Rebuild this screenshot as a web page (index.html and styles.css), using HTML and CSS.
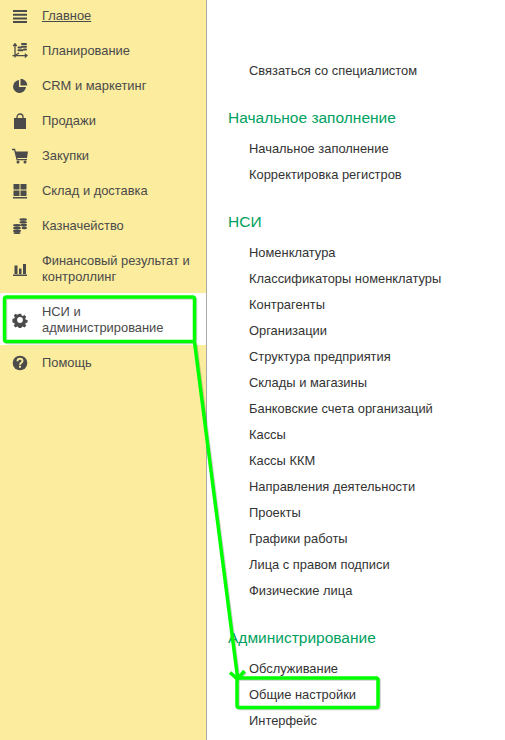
FILE: index.html
```html
<!DOCTYPE html>
<html lang="ru">
<head>
<meta charset="utf-8">
<title>НСИ и администрирование</title>
<link rel="stylesheet" href="styles.css">
</head>
<body>
<div class="page">
  <nav class="sidebar">
    <ul class="nav">
      <li class="nav-item">
        <svg class="icon" viewBox="0 0 16 16"><path d="M1 2h14v2H1zM1 5.700h14v2H1zM1 9.400h14v2H1zM1 13h14v2H1z"/></svg>
        <span class="nav-label current">Главное</span>
      </li>
      <li class="nav-item">
        <svg class="icon" viewBox="0 0 16 16"><path class="line" d="M3 1v13.500M.5 12.600h14.500M1.300 3L3 .8 4.700 3M12.800 10.800l2.200 1.800-2.200 1.800M3 12.500l4-2.500"/><rect x="9" y="0" width="6" height="2" rx="1"/><rect x="9" y="2.700" width="6" height="2" rx="1"/><rect x="5.500" y="3.500" width="4.500" height="2" rx="1"/><rect x="5.500" y="6.200" width="6" height="2" rx="1"/><rect x="11" y="5.400" width="4" height="2" rx="1"/></svg>
        <span class="nav-label">Планирование</span>
      </li>
      <li class="nav-item">
        <svg class="icon" viewBox="0 0 16 16"><path d="M7 2a6.500 6.500 0 1 0 7 7H7z"/><path d="M8.500 .7a7 7 0 0 1 6.800 6.800H8.500z"/></svg>
        <span class="nav-label">CRM и маркетинг</span>
      </li>
      <li class="nav-item">
        <svg class="icon" viewBox="0 0 16 16"><path d="M2 5h12v11H2z"/><path class="line" d="M5 8V4a3 3 0 0 1 6 0v4"/></svg>
        <span class="nav-label">Продажи</span>
      </li>
      <li class="nav-item">
        <svg class="icon" viewBox="0 0 16 16"><path d="M3.500 3.500H16l-1 6.500H4.500z"/><path d="M4.500 11h10.500v1.300H4.500z"/><circle cx="6" cy="14" r="1.500"/><circle cx="13" cy="14" r="1.500"/><path class="line" d="M0 1.500h2.600L5 11"/></svg>
        <span class="nav-label">Закупки</span>
      </li>
      <li class="nav-item">
        <svg class="icon" viewBox="0 0 16 16"><path d="M1.500 1h6v5.500h-6zM8.500 1h6v5.500h-6zM1.500 7.500h6V13h-6zM8.500 7.500h6V13h-6zM1 14h14v1.500H1z"/></svg>
        <span class="nav-label">Склад и доставка</span>
      </li>
      <li class="nav-item">
        <svg class="icon" viewBox="0 0 16 16"><ellipse cx="11.200" cy="1.500" rx="3.800" ry="1.300"/><ellipse cx="11.200" cy="4.300" rx="3.800" ry="1.300"/><ellipse cx="11.800" cy="7.100" rx="3.200" ry="1.300"/><ellipse cx="12.300" cy="9.900" rx="2.700" ry="1.300"/><ellipse cx="5" cy="7.300" rx="4" ry="1.400"/><ellipse cx="5" cy="10.100" rx="4" ry="1.400"/><ellipse cx="5" cy="12.900" rx="4" ry="1.400"/><ellipse cx="5" cy="14.900" rx="3.600" ry="1"/></svg>
        <span class="nav-label">Казначейство</span>
      </li>
      <li class="nav-item">
        <svg class="icon" viewBox="0 0 16 16"><path d="M2.500 4.500h3V13h-3zM7 7.500h2.500V13H7zM11 3h3v10h-3zM1 13.500h14V15H1z"/></svg>
        <span class="nav-label">Финансовый результат и контроллинг</span>
      </li>
      <li class="nav-item active">
        <svg class="icon" viewBox="0 0 16 16"><path fill-rule="evenodd" d="M6.600 1h2.800l.4 2 1.300.6 1.800-1.100 2 2-1.100 1.800.6 1.300 2 .4v2.800l-2 .4-.6 1.300 1.100 1.800-2 2-1.800-1.100-1.300.6-.4 2H6.600l-.4-2-1.300-.6-1.800 1.100-2-2 1.100-1.800-.6-1.300-2-.4V6.600l2-.4.6-1.300-1.100-1.800 2-2 1.800 1.100 1.300-.6zM8 4.800a3.200 3.200 0 1 0 0 6.400 3.200 3.200 0 0 0 0-6.400z" transform="translate(.8 .8) scale(.9)"/></svg>
        <span class="nav-label">НСИ и администрирование</span>
      </li>
      <li class="nav-item">
        <svg class="icon" viewBox="0 0 16 16"><circle cx="8" cy="8" r="7.300"/><path class="hole" d="M5.500 6.200c0-1.500 1.100-2.400 2.500-2.400s2.500.9 2.500 2.200c0 1.800-2.500 1.800-2.500 3.700"/><rect class="dot" x="7" y="10.700" width="2" height="2"/></svg>
        <span class="nav-label">Помощь</span>
      </li>
    </ul>
  </nav>
  <main class="content">
    <ul class="links">
      <li>Связаться со специалистом</li>
    </ul>
    <section class="group">
      <h2 class="group-title">Начальное заполнение</h2>
      <ul class="links">
        <li>Начальное заполнение</li>
        <li>Корректировка регистров</li>
      </ul>
    </section>
    <section class="group">
      <h2 class="group-title">НСИ</h2>
      <ul class="links">
        <li>Номенклатура</li>
        <li>Классификаторы номенклатуры</li>
        <li>Контрагенты</li>
        <li>Организации</li>
        <li>Структура предприятия</li>
        <li>Склады и магазины</li>
        <li>Банковские счета организаций</li>
        <li>Кассы</li>
        <li>Кассы ККМ</li>
        <li>Направления деятельности</li>
        <li>Проекты</li>
        <li>Графики работы</li>
        <li>Лица с правом подписи</li>
        <li>Физические лица</li>
      </ul>
    </section>
    <section class="group">
      <h2 class="group-title">Администрирование</h2>
      <ul class="links">
        <li>Обслуживание</li>
        <li>Общие настройки</li>
        <li>Интерфейс</li>
      </ul>
    </section>
  </main>
  <svg class="annotation" viewBox="0 0 505 740">
    <rect x="4.500" y="297" width="190" height="44.500" rx="2"/>
    <rect x="237" y="678" width="141" height="29.500" rx="2"/>
    <path d="M194.500 342L237.500 677M230 672.500l7.500 6.500 7-8"/>
  </svg>
</div>
</body>
</html>
```

FILE: styles.css
```css
* { box-sizing: border-box; }
html, body { margin: 0; padding: 0; height: 100%; overflow: hidden; background: #fff; }
body { font-family: "Liberation Sans", Arial, sans-serif; font-size: 12.9px; color: #333; }
ul { list-style: none; margin: 0; padding: 0; }

.page { position: relative; display: flex; width: 505px; height: 740px; overflow: hidden; }

.sidebar { flex: 0 0 207px; height: 100%; background: #fbec9e; border-right: 1px solid #a9a9a9; }
.nav { margin-top: -3px; }
.nav-item { display: flex; align-items: center; gap: 14px; padding: 11px 12px 8px 12px; line-height: 16px; color: #4a4a4a; }
.nav-item.active { background: #fff; padding-bottom: 9px; margin-bottom: -1px; }
.nav-label { flex: 1; min-width: 0; }
.nav-label.current { text-decoration: underline; }

.icon { flex: 0 0 16px; width: 16px; height: 16px; fill: #4b4b4b; }
.icon .line { fill: none; stroke: #4b4b4b; stroke-width: 1.300; }
.icon .hole { fill: none; stroke: #fbec9e; stroke-width: 1.900; }
.icon .dot { fill: #fbec9e; }

.content { flex: 1; padding: 58px 0 0 21px; }
.links li { padding-left: 21px; height: 26px; line-height: 26px; color: #333; }
.group { margin-top: 23px; }
.group-title { margin: 0 0 7px; height: 22px; line-height: 22px; font-size: 15.5px; font-weight: 400; color: #00a160; }

.annotation { position: absolute; left: 0; top: 0; width: 505px; height: 740px; fill: none; stroke: #00ff00; stroke-width: 3.500; filter: drop-shadow(1px 1px 0 rgba(0, 0, 0, .2)); pointer-events: none; }
```
